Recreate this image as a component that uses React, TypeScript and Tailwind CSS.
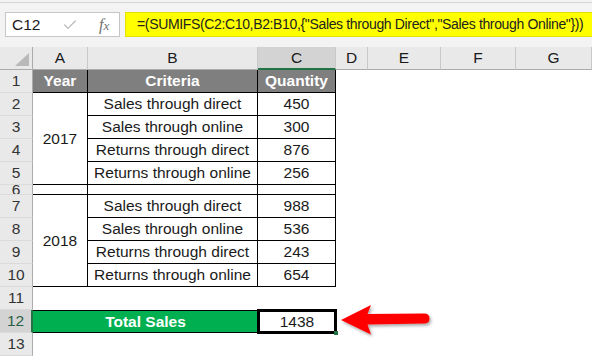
import { Check } from "lucide-react";

const colHeads = [
  { label: "A", pos: "col-start-2", active: false },
  { label: "B", pos: "col-start-3", active: false },
  { label: "C", pos: "col-start-4", active: true },
  { label: "D", pos: "col-start-5", active: false },
  { label: "E", pos: "col-start-6", active: false },
  { label: "F", pos: "col-start-7", active: false },
  { label: "G", pos: "col-start-8", active: false },
];

const rowHeads = [
  { n: 1, pos: "row-start-2" },
  { n: 2, pos: "row-start-3" },
  { n: 3, pos: "row-start-4" },
  { n: 4, pos: "row-start-5" },
  { n: 5, pos: "row-start-6" },
  { n: 6, pos: "row-start-7" },
  { n: 7, pos: "row-start-8" },
  { n: 8, pos: "row-start-9" },
  { n: 9, pos: "row-start-10" },
  { n: 10, pos: "row-start-11" },
  { n: 11, pos: "row-start-12" },
  { n: 12, pos: "row-start-13" },
  { n: 13, pos: "row-start-14" },
];

const lines = [
  { label: "Sales through direct", qty: 450, pos: "row-start-3" },
  { label: "Sales through online", qty: 300, pos: "row-start-4" },
  { label: "Returns through direct", qty: 876, pos: "row-start-5" },
  { label: "Returns through online", qty: 256, pos: "row-start-6" },
  { label: "Sales through direct", qty: 988, pos: "row-start-8" },
  { label: "Sales through online", qty: 536, pos: "row-start-9" },
  { label: "Returns through direct", qty: 243, pos: "row-start-10" },
  { label: "Returns through online", qty: 654, pos: "row-start-11" },
];

const cell = "flex items-center justify-center border-r border-b border-black";

export default function App() {
  return (
    <div className="flex h-[356px] w-[592px] flex-col overflow-hidden bg-white font-['Liberation_Sans',Arial,sans-serif] text-[15.5px] text-[#1a1a1a]">
      {/* formula bar */}
      <div className="flex h-[47px] flex-col border-t-[2px] border-[#f3f3f3] bg-[#f3f3f3]">
        <div className="h-px bg-[#d6d6d6]" />
        <div className="mt-[9px] flex h-[25px] items-stretch gap-[5px] pl-[5px]">
          <div className="flex w-[115px] shrink-0 items-center border border-[#c6c6c6] bg-white pl-[6px]">
            <span className="w-[50px]">C12</span>
            <Check size={16} strokeWidth={1.8} className="text-[#b8b8b8]" />
            <span className="ml-[21px] font-['Liberation_Serif',serif] text-[16px] italic text-[#707070]">
              f<span className="text-[13px]">x</span>
            </span>
          </div>
          <div className="flex min-w-0 flex-1 items-center overflow-hidden border-y border-l border-[#e6e000] bg-[#ffff00] pl-[11px] text-[14px] tracking-[-0.35px] whitespace-nowrap text-[#222]">
            =(SUMIFS(C2:C10,B2:B10,{"{"}"Sales through Direct","Sales through Online"{"}"}))
          </div>
        </div>
      </div>

      {/* sheet */}
      <div className="relative grid flex-1 grid-cols-[33px_55px_170px_78px_32px_73px_75px_1fr] grid-rows-[23px_23px_23px_23px_23px_23px_10px_23px_23px_23px_23px_23px_23px_23px]">
        <div className="col-start-1 row-start-1 flex items-end justify-end border-r border-b border-[#ababab] bg-[#e9e9e9] pr-[3px] pb-[3px]">
          <svg width="14" height="13" viewBox="0 0 14 13">
            <path d="M14 0 L14 13 L0 13 Z" fill="#b9b9b9" />
          </svg>
        </div>

        {colHeads.map((c) => (
          <div
            key={c.label}
            className={`${c.pos} row-start-1 flex items-center justify-center border-r border-[#c8c8c8] ${
              c.active
                ? "border-b-2 border-b-[#217346] bg-[#d3d3d3]"
                : "border-b border-b-[#ababab] bg-[#e9e9e9]"
            }`}
          >
            {c.label}
          </div>
        ))}

        {rowHeads.map((r) => (
          <div
            key={r.n}
            className={`${r.pos} col-start-1 flex items-center justify-center overflow-hidden border-b border-b-[#dadada] ${
              r.n === 12
                ? "border-r-2 border-r-[#217346] bg-[#d3d3d3] text-[#2c5f48]"
                : "border-r border-r-[#ababab] bg-[#e9e9e9] text-[#333]"
            }`}
          >
            {r.n}
          </div>
        ))}

        {/* header row */}
        <div className={`${cell} col-start-2 row-start-2 bg-[#7f7f7f] font-bold text-white`}>Year</div>
        <div className={`${cell} col-start-3 row-start-2 bg-[#7f7f7f] font-bold text-white`}>Criteria</div>
        <div className={`${cell} col-start-4 row-start-2 bg-[#7f7f7f] font-bold text-white`}>Quantity</div>

        <div className={`${cell} col-start-2 row-start-3 row-span-4`}>2017</div>
        <div className={`${cell} col-start-2 row-start-8 row-span-4`}>2018</div>

        {lines.map((l, i) => (
          <div key={i} className="contents">
            <div className={`${cell} ${l.pos} col-start-3`}>{l.label}</div>
            <div className={`${cell} ${l.pos} col-start-4`}>{l.qty}</div>
          </div>
        ))}

        <div className="col-start-2 row-start-7 border-r border-b border-black" />
        <div className="col-start-3 row-start-7 border-r border-b border-black" />
        <div className="col-start-4 row-start-7 border-r border-b border-black" />

        <div className="col-span-2 col-start-2 row-start-13 flex items-center justify-center border-y border-black bg-[#00b050] font-bold text-white">
          Total Sales
        </div>
        <div className="relative col-start-4 row-start-13">
          <div className="absolute -inset-px flex items-center justify-center border-[3px] border-black bg-white">
            1438
          </div>
          <div className="absolute -right-[2px] -bottom-[2px] h-[4px] w-[4px] bg-[#217346]" />
        </div>

        {/* red arrow */}
        <svg
          className="absolute top-[255px] left-[336px]"
          width="100"
          height="40"
          viewBox="336 302 100 40"
        >
          <defs>
            <filter id="sh" x="-10%" y="-20%" width="130%" height="160%">
              <feDropShadow dx="1.5" dy="2" stdDeviation="1.5" floodColor="#000" floodOpacity="0.35" />
            </filter>
          </defs>
          <path
            d="M341 320 L371 305 L367.5 314 L424 313.5 Q429.5 313.5 429.5 318.5 Q429.5 323.5 424 323.5 L367.5 324.5 L371 334.5 Z"
            fill="#ff0000"
            filter="url(#sh)"
          />
        </svg>
      </div>
    </div>
  );
}
